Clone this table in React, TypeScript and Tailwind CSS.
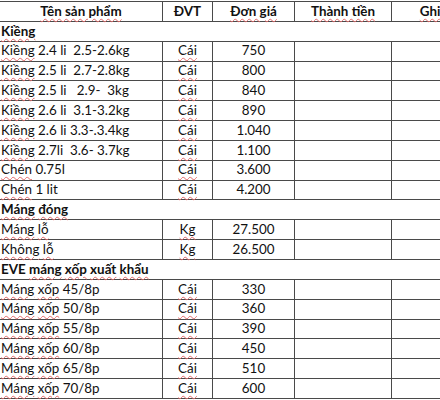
import React from 'react';

type Row =
  | { kind: 'section'; title: React.ReactNode }
  | { kind: 'item'; name: React.ReactNode; unit: string; price: string };

const Sq: React.FC<{ children: React.ReactNode }> = ({ children }) => (
  <span className="underline decoration-wavy decoration-[#e36a6a] decoration-[1px] underline-offset-[2px]">
    {children}
  </span>
);

const rows: Row[] = [
  { kind: 'section', title: <Sq>Kiềng</Sq> },
  { kind: 'item', name: <><Sq>Kiềng</Sq>{' 2.4 li  2.5-2.6kg'}</>, unit: 'Cái', price: '750' },
  { kind: 'item', name: <><Sq>Kiềng</Sq>{' 2.5 li  2.7-2.8kg'}</>, unit: 'Cái', price: '800' },
  { kind: 'item', name: <><Sq>Kiềng</Sq>{' 2.5 li   2.9-  3kg'}</>, unit: 'Cái', price: '840' },
  { kind: 'item', name: <><Sq>Kiềng</Sq>{' 2.6 li  3.1-3.2kg'}</>, unit: 'Cái', price: '890' },
  { kind: 'item', name: <><Sq>Kiềng</Sq>{' 2.6 li 3.3-.3.4kg'}</>, unit: 'Cái', price: '1.040' },
  { kind: 'item', name: <><Sq>Kiềng</Sq>{' 2.7li  3.6- 3.7kg'}</>, unit: 'Cái', price: '1.100' },
  { kind: 'item', name: <><Sq>Chén</Sq>{' 0.75l'}</>, unit: 'Cái', price: '3.600' },
  { kind: 'item', name: <><Sq>Chén</Sq>{' 1 lit'}</>, unit: 'Cái', price: '4.200' },
  { kind: 'section', title: <><Sq>Máng</Sq>{' '}<Sq>đóng</Sq></> },
  { kind: 'item', name: <><Sq>Máng</Sq>{' '}<Sq>lỗ</Sq></>, unit: 'Kg', price: '27.500' },
  { kind: 'item', name: <><Sq>Không</Sq>{' '}<Sq>lỗ</Sq></>, unit: 'Kg', price: '26.500' },
  { kind: 'section', title: <>{'EVE '}<Sq>máng</Sq>{' '}<Sq>xốp</Sq>{' '}<Sq>xuất</Sq>{' '}<Sq>khẩu</Sq></> },
  { kind: 'item', name: <><Sq>Máng</Sq>{' '}<Sq>xốp</Sq>{' 45/8p'}</>, unit: 'Cái', price: '330' },
  { kind: 'item', name: <><Sq>Máng</Sq>{' '}<Sq>xốp</Sq>{' 50/8p'}</>, unit: 'Cái', price: '360' },
  { kind: 'item', name: <><Sq>Máng</Sq>{' '}<Sq>xốp</Sq>{' 55/8p'}</>, unit: 'Cái', price: '390' },
  { kind: 'item', name: <><Sq>Máng</Sq>{' '}<Sq>xốp</Sq>{' 60/8p'}</>, unit: 'Cái', price: '450' },
  { kind: 'item', name: <><Sq>Máng</Sq>{' '}<Sq>xốp</Sq>{' 65/8p'}</>, unit: 'Cái', price: '510' },
  { kind: 'item', name: <><Sq>Máng</Sq>{' '}<Sq>xốp</Sq>{' 70/8p'}</>, unit: 'Cái', price: '600' },
];

const grid = 'grid grid-cols-[163px_50px_82px_97px_102px] h-[19.85px] border-b border-[#4a4a4a]';
const cell = 'border-r border-[#4a4a4a] flex items-center';

const App: React.FC = () => {
  return (
    <div className="w-[440px] h-[400px] overflow-hidden bg-white text-[#111] font-['Lato',sans-serif] text-[13.4px] leading-none">
      <div className="pt-px w-[494px]">
        <div className="border-t border-[#4a4a4a]">
          <div className={`${grid} font-bold`}>
            <div className={`${cell} justify-center`}><Sq>Tên sản phẩm</Sq></div>
            <div className={`${cell} justify-center`}>ĐVT</div>
            <div className={`${cell} justify-center`}><Sq>Đơn giá</Sq></div>
            <div className={`${cell} justify-center`}><Sq>Thành tiền</Sq></div>
            <div className={`${cell} justify-center`}>
              <span className="whitespace-nowrap"><Sq>Ghi</Sq> <Sq>chú</Sq></span>
            </div>
          </div>
          {rows.map((row, i) =>
            row.kind === 'section' ? (
              <div key={i} className="h-[19.85px] border-b border-[#4a4a4a] flex items-center pl-px font-bold">
                <span className="whitespace-pre">{row.title}</span>
              </div>
            ) : (
              <div key={i} className={grid}>
                <div className={`${cell} pl-px`}>
                  <span className="whitespace-pre">{row.name}</span>
                </div>
                <div className={`${cell} justify-center`}><Sq>{row.unit}</Sq></div>
                <div className={`${cell} justify-center`}>{row.price}</div>
                <div className={cell} />
                <div className={cell} />
              </div>
            )
          )}
        </div>
      </div>
    </div>
  );
};

export default App;
